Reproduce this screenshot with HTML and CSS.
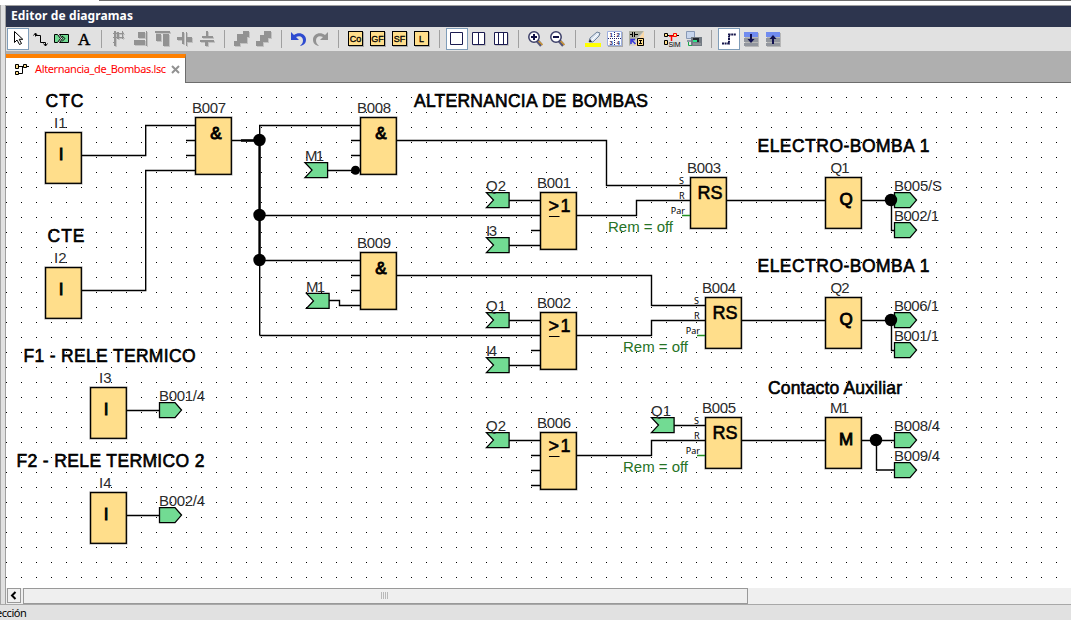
FILE: index.html
```html
<!DOCTYPE html>
<html lang="es">
<head>
<meta charset="utf-8">
<title>Editor de diagramas</title>
<link rel="stylesheet" href="styles.css">
</head>
<body>
<div class="app">
  <div class="top-edge"></div>
  <div class="workspace">
    <div class="splitter"></div>
    <main class="editor">
      <header class="titlebar"><span class="title">Editor de diagramas</span></header>
      <div class="toolbar">
        <svg class="tool active" viewBox="0 0 22 22"><path d="M7.5 3.5v11l2.5-2.5 2.5 4.5 2-1-2.3-4.2h3.6z" fill="#fff" stroke="#000"/></svg>
        <svg class="tool" viewBox="0 0 22 22"><path class="line" d="M6.500 8.500v-3M4.500 7.500l2-2.500 2 2.500M6 7.500h5.500v7h5v3.500M14.500 15.500l2 2.500 2-2.500"/></svg>
        <svg class="tool" viewBox="0 0 22 22"><path d="M3.500 6.500h3l3 4-3 4h-3zM8.500 6.500h9v8h-9l3-4z" fill="#72db93" stroke="#000"/><path class="line" d="M11 8l3 2.500-3 3"/></svg>
        <svg class="tool" viewBox="0 0 22 22"><text class="serif-a" x="5" y="17">A</text></svg>
        <i class="sep"></i>
        <svg class="tool gray shade" viewBox="0 0 22 22"><path d="M6 3h2v15H6zM5 5h11v1H5zM5 9h11v1H5zM9 4h2v7H9zM14 3h1v8h-1zM5 14h3v1H5z"/></svg>
        <svg class="tool gray shade" viewBox="0 0 22 22"><path d="M16 3h1v15h-1zM8 4h7v6H8zM4 12h11v5H4z"/></svg>
        <svg class="tool gray shade" viewBox="0 0 22 22"><path d="M3 3h15v2H3zM4 6h5v7H4zM11 6h6v12h-6z"/></svg>
        <svg class="tool gray shade" viewBox="0 0 22 22"><path d="M3 9h5v3H3zM8 4h2v12H8zM12 4h1v14h-1zM13 9h5v5h-5z"/></svg>
        <svg class="tool gray shade" viewBox="0 0 22 22"><path d="M10 3h2v5h-2zM6 8h11v2H6zM4 12h14v2H4zM9 14h3v4H9z"/></svg>
        <i class="sep"></i>
        <svg class="tool gray shade" viewBox="0 0 22 22"><path d="M12 3h6v6h-2v6H9v3H3v-5h3V6h6z"/></svg>
        <svg class="tool gray shade" viewBox="0 0 22 22"><path d="M11 3h7v7h-3v4h-5v4H3v-5h4V7h4z"/></svg>
        <i class="sep"></i>
        <svg class="tool" viewBox="0 0 22 22"><path d="M3 4v8h8L8 9c4-2 7 0 7 3.500 0 2.500-1.500 4-3 5.500 3.500-.5 6-2.500 6-6.500C18 6 11 3 6 7z" fill="#2e4bd0"/></svg>
        <svg class="tool gray" viewBox="0 0 22 22"><path d="M18 4v8h-8l3-3c-4-2-7 0-7 3.500C6 15 7.500 16.500 9 18c-3.500-.5-6-2.500-6-6.500C3 6 10 3 15 7z"/></svg>
        <i class="sep"></i>
        <span class="tool"><b class="chip">Co</b></span>
        <span class="tool"><b class="chip">GF</b></span>
        <span class="tool"><b class="chip">SF</b></span>
        <span class="tool"><b class="chip">L</b></span>
        <i class="sep"></i>
        <svg class="tool active pane" viewBox="0 0 22 22"><path d="M4.500 4.500h12v12h-12z"/></svg>
        <svg class="tool pane" viewBox="0 0 22 22"><path d="M4.500 4.500h12v12h-12zM10.500 4.500v12"/></svg>
        <svg class="tool pane" viewBox="0 0 22 22"><path d="M4.500 4.500h13v12h-13zM8.500 4.500v12M13.500 4.500v12"/></svg>
        <i class="sep"></i>
        <svg class="tool" viewBox="0 0 22 22"><path d="M12.500 13l4 4.500" stroke="#557" stroke-width="3.500"/><path d="M13.500 13l4 4" stroke="#d49b32" stroke-width="1.500"/><circle cx="9" cy="9" r="5.200" fill="#fff" stroke="#3c3f68" stroke-width="1.500"/><path d="M6 9h6M9 6v6" stroke="#111144" stroke-width="2"/></svg>
        <svg class="tool" viewBox="0 0 22 22"><path d="M12.500 13l4 4.500" stroke="#557" stroke-width="3.500"/><path d="M13.500 13l4 4" stroke="#d49b32" stroke-width="1.500"/><circle cx="9" cy="9" r="5.200" fill="#fff" stroke="#3c3f68" stroke-width="1.500"/><path d="M6 9h6" stroke="#111144" stroke-width="2"/></svg>
        <i class="sep"></i>
        <svg class="tool" viewBox="0 0 22 22"><path d="M3 15h16v4H3z" fill="#ff0"/><path d="M7 14l1-4 7-6 3 1-1 3-6 6z" fill="#dce6f2" stroke="#6f8299"/><path d="M7 14l1-3 2 3z" fill="#223"/><path d="M10 12l6-6" stroke="#fff"/></svg>
        <svg class="tool" viewBox="0 0 22 22"><path d="M4 4h15v15H4z" fill="#aaa"/><path d="M3.500 3.500h14v14h-14z" fill="#fff" stroke="#9fb0e0"/><path d="M10.500 4v13M4 10.500h13" stroke="#20206a" stroke-dasharray="1 1"/><text class="digits" x="5.500" y="9">1</text><text class="digits" x="12.500" y="9">2</text><text class="digits" x="5.500" y="16.500">3</text><text class="digits" x="12.500" y="16.500">4</text></svg>
        <svg class="tool" viewBox="0 0 22 22"><path d="M3 3h15v15H3z" fill="#d3d3d3"/><path d="M3 3h15L3 18z" fill="#acaea0"/><path d="M18 3v15H8z" fill="#fbd9a6"/><path class="line" d="M4 6.500h3M6.500 4v5M8.500 4v5M9 6.500h3"/><path d="M11.500 10.500h6v7h-6z" fill="#ffde8b" stroke="#000"/><path class="line" d="M13 12.500h3M14.500 12v4M13 15.500h3"/><path d="M9.500 16L6 12.500M5 16v-4.500h4" fill="none" stroke="#3434e0" stroke-width="1.500"/></svg>
        <i class="sep"></i>
        <svg class="tool" viewBox="0 0 22 22"><path d="M3.500 5.500h3v3h-3zM3.500 12.500h3v4h-3z" fill="#ffde8b" stroke="#000"/><path d="M7 7.500h6M16 7.500h2" stroke="#000"/><path d="M8 8h5M10.500 8v5" stroke="#f00" stroke-width="1.500"/><path d="M12.500 5.500h3v3h-3z" fill="#ffde8b" stroke="#f00"/><text class="sim" x="7.500" y="19" textLength="12">SIM</text></svg>
        <svg class="tool" viewBox="0 0 22 22"><path d="M3.500 3.500h8v7h-8z" fill="#c7d5ec" stroke="#8798b5"/><path d="M4 12h8v2H4z" fill="#8d96a5"/><path d="M8 9h11v9H8z" fill="#737b83"/><path d="M10 10h6v4h-6z" fill="#23272e"/><path d="M10 12h4v2h-4z" fill="#2fe58b"/><path d="M5.500 14v3.500H9" fill="none" stroke="#18a64a"/><path d="M10 16h8" stroke="#aaa"/></svg>
        <i class="sep"></i>
        <svg class="tool active" viewBox="0 0 22 22"><path d="M4 15.500h7v-9h7" fill="none" stroke="#16164c" stroke-width="2" stroke-dasharray="2 .6"/></svg>
        <svg class="tool" viewBox="0 0 22 22"><path d="M5 5h14v14H5z" fill="#b7b7b7"/><path d="M4 4h14v5H4z" fill="#708bef"/><path d="M4 10h14v4H4zM4 15h14v3H4z" fill="#92969e"/><path d="M11 6v6" stroke="#101050" stroke-width="2"/><path d="M7.500 11h7L11 15z" fill="#101050"/></svg>
        <svg class="tool" viewBox="0 0 22 22"><path d="M5 5h14v14H5z" fill="#b7b7b7"/><path d="M4 4h14v5H4z" fill="#708bef"/><path d="M4 10h14v4H4zM4 15h14v3H4z" fill="#92969e"/><path d="M11 9v7" stroke="#101050" stroke-width="2"/><path d="M7.500 11h7L11 7z" fill="#101050"/></svg>
      </div>
      <nav class="tabs">
        <div class="tab">
          <svg class="tab-icon" viewBox="0 0 16 16"><path d="M5 3.500h6M12 3.500h3M8.500 4v6.500H5" fill="none" stroke="#000"/><path d="M1.500 1.500h3v4h-3zM1.500 8.500h3v3h-3zM9.500 1.500h3v3h-3z" fill="#ffde8b" stroke="#000"/></svg>
          <span class="tab-name">Alternancia_de_Bombas.lsc</span>
          <svg class="tab-close" viewBox="0 0 9 9"><path d="M1 1l7 7M8 1L1 8"/></svg>
        </div>
        <div class="tab-rest"></div>
      </nav>
      <svg class="canvas" viewBox="6 83 1065 505">
        <defs>
          <pattern id="grid" x="6" y="97" width="15" height="15" patternUnits="userSpaceOnUse"><rect width="1" height="1" fill="#000"/></pattern>
          <path id="in" d="M0 0h22.600v15H0l7-7.500z"/>
          <path id="out" d="M0 0h15.500l6.500 7.500-6.500 7.500H0z"/>
          <rect id="small" width="35.700" height="50.700"/>
          <rect id="gate" width="35.700" height="56.700"/>
        </defs>
        <rect x="6" y="83" width="1051" height="505" fill="url(#grid)"/>

        <g class="halo">
          <use href="#small" x="45.600" y="132.600"/><use href="#small" x="45.600" y="267.600"/><use href="#small" x="90.600" y="387.600"/><use href="#small" x="90.600" y="492.600"/>
          <use href="#gate" x="195.600" y="117.600"/><use href="#gate" x="360.600" y="117.600"/><use href="#gate" x="360.600" y="252.600"/>
          <use href="#gate" x="540.600" y="192.600"/><use href="#gate" x="540.600" y="312.600"/><use href="#gate" x="540.600" y="432.600"/>
          <use href="#small" x="690.600" y="177.600"/><use href="#small" x="705.600" y="297.600"/><use href="#small" x="705.600" y="417.600"/>
          <use href="#small" x="825.600" y="177.600"/><use href="#small" x="825.600" y="297.600"/><use href="#small" x="825.600" y="417.600"/>
        </g>

        <g class="wires">
          <path d="M82 155.500h63.700v-30H195M82 290.500h63.700v-120H195M186 140.500h9M186 155.500h9"/>
          <path d="M232 140.500h27M259.700 335.500v-210H360M259.700 215.500H540M259.700 260.500H360M259.700 335.500H540"/>
          <path class="heavy" d="M241 140.500h18M259.500 140v120"/>
          <path d="M351 140.500h9M351 155.500h9M328 170.500h32M351 275.500h9M351 290.500h9M329 300.500h10.500v5H360"/>
          <path d="M397 140.500h209.500v45H690M397 275.500h254.500v30H705"/>
          <path d="M509 200.500h31M531 230.500h9M509 245.500h31M577 215.500h59.500v-15H690"/>
          <path d="M509 320.500h31M531 350.500h9M509 365.500h31M577 335.500h74.500v-15H705"/>
          <path d="M509 440.500h31M531 455.500h9M531 470.500h9M531 485.500h9M577 455.500h74.500v-15H705M674 425.500h31"/>
          <path d="M727 200.500h98M742 320.500h83M742 440.500h83M862 200.500h29.500v30h4M862 320.500h29.500v30h4M862 440.500h32M876.500 440v30H894M127 410.500h32M127 515.500h32"/>
          <path class="param" d="M682 215.500h8M697 335.500h8M697 455.500h8"/>
        </g>

        <g class="blocks">
          <use href="#small" x="45.600" y="132.600"/><use href="#small" x="45.600" y="267.600"/><use href="#small" x="90.600" y="387.600"/><use href="#small" x="90.600" y="492.600"/>
          <use href="#gate" x="195.600" y="117.600"/><use href="#gate" x="360.600" y="117.600"/><use href="#gate" x="360.600" y="252.600"/>
          <use href="#gate" x="540.600" y="192.600"/><use href="#gate" x="540.600" y="312.600"/><use href="#gate" x="540.600" y="432.600"/>
          <use href="#small" x="690.600" y="177.600"/><use href="#small" x="705.600" y="297.600"/><use href="#small" x="705.600" y="417.600"/>
          <use href="#small" x="825.600" y="177.600"/><use href="#small" x="825.600" y="297.600"/><use href="#small" x="825.600" y="417.600"/>
        </g>
        <g class="flags">
          <use href="#in" x="305" y="162.600"/><use href="#in" x="306.500" y="293.400"/>
          <use href="#in" x="486.500" y="192.600"/><use href="#in" x="486.500" y="237.600"/><use href="#in" x="486.500" y="312.600"/><use href="#in" x="486.500" y="357.600"/><use href="#in" x="486.500" y="432.600"/><use href="#in" x="651.500" y="417.600"/>
          <use href="#out" x="159.500" y="402.600"/><use href="#out" x="159.500" y="507.600"/>
          <use href="#out" x="894.500" y="192.600"/><use href="#out" x="894.500" y="222.600"/><use href="#out" x="894.500" y="312.600"/><use href="#out" x="894.500" y="342.600"/><use href="#out" x="894.500" y="432.600"/><use href="#out" x="894.500" y="462.600"/>
        </g>
        <g>
          <circle cx="259.500" cy="140" r="6.200"/><circle cx="259.500" cy="215" r="6.200"/><circle cx="259.500" cy="260" r="6.200"/>
          <circle cx="355.500" cy="170.200" r="4.500"/><circle cx="891" cy="200" r="6.200"/><circle cx="891" cy="320" r="6.200"/><circle cx="876" cy="440" r="6.200"/>
        </g>

        <g class="comment">
          <text x="45.500" y="107" textLength="38">CTC</text><text x="47.500" y="242" textLength="37">CTE</text>
          <text x="414" y="107" textLength="234">ALTERNANCIA DE BOMBAS</text>
          <text x="757.500" y="152" textLength="172">ELECTRO-BOMBA 1</text><text x="757.500" y="272" textLength="172">ELECTRO-BOMBA 1</text>
          <text x="768" y="394" textLength="134">Contacto Auxiliar</text>
          <text x="23.500" y="362" textLength="172">F1 - RELE TERMICO</text><text x="16.500" y="467" textLength="188">F2 - RELE TERMICO 2</text>
        </g>
        <g class="name">
          <text x="54" y="128">I1</text><text x="54" y="263">I2</text><text x="99" y="383">I3</text><text x="99" y="488">I4</text>
          <text x="192" y="113" textLength="34">B007</text><text x="357" y="113" textLength="34">B008</text><text x="357" y="248" textLength="34">B009</text>
          <text x="537" y="188" textLength="34">B001</text><text x="537" y="308" textLength="34">B002</text><text x="537" y="428" textLength="34">B006</text>
          <text x="687" y="173" textLength="34">B003</text><text x="702" y="293" textLength="34">B004</text><text x="702" y="413" textLength="34">B005</text>
          <text x="830.500" y="173" textLength="19">Q1</text><text x="830.500" y="293" textLength="19">Q2</text><text x="830" y="413" textLength="19">M1</text>
          <text x="305" y="161" textLength="19">M1</text><text x="306" y="292" textLength="19">M1</text>
          <text x="486" y="191">Q2</text><text x="486" y="236" textLength="11">I3</text><text x="486" y="311">Q1</text><text x="486" y="356" textLength="11">I4</text><text x="486" y="431">Q2</text><text x="651" y="416">Q1</text>
          <text x="159" y="401" textLength="46">B001/4</text><text x="159" y="506" textLength="46">B002/4</text>
          <text x="894" y="191" textLength="48">B005/S</text><text x="894" y="221" textLength="45">B002/1</text>
          <text x="894" y="311" textLength="45">B006/1</text><text x="894" y="341" textLength="45">B001/1</text>
          <text x="894" y="431" textLength="46">B008/4</text><text x="894" y="461" textLength="46">B009/4</text>
        </g>
        <g class="symbol">
          <text x="61" y="160">I</text><text x="61" y="295">I</text><text x="106" y="415">I</text><text x="106" y="520">I</text>
          <text x="216" y="139">&amp;</text><text x="381" y="139">&amp;</text><text x="381" y="274">&amp;</text>
          <text x="846" y="205">Q</text><text x="846" y="325">Q</text><text x="846" y="445">M</text>
        </g>
        <g class="function">
          <text x="548.500" y="212" textLength="22">&gt;1</text><text x="548.500" y="332" textLength="22">&gt;1</text><text x="548.500" y="452" textLength="22">&gt;1</text>
          <text x="697.500" y="199">RS</text><text x="712.500" y="319">RS</text><text x="712.500" y="439">RS</text>
        </g>
        <path class="or-bar" d="M549 216.500h10.500M549 336.500h10.500M549 456.500h10.500"/>
        <g class="port">
          <text x="684" y="184">S</text><text x="684.500" y="199">R</text><text x="685" y="214">Par</text>
          <text x="699" y="304">S</text><text x="699.500" y="319">R</text><text x="700" y="334">Par</text>
          <text x="699" y="424">S</text><text x="699.500" y="439">R</text><text x="700" y="454">Par</text>
        </g>
        <g class="remark">
          <text x="608" y="232" textLength="65">Rem = off</text><text x="623" y="352" textLength="65">Rem = off</text><text x="623" y="472" textLength="65">Rem = off</text>
        </g>
      </svg>
      <div class="scrollbar">
        <div class="scroll-btn"><svg viewBox="0 0 7 9"><path d="M5.500 1L2 4.500 5.500 8"/></svg></div>
        <div class="thumb"><i class="grip"></i></div>
      </div>
    </main>
  </div>
  <footer class="status"><span class="status-text">ección</span></footer>
</div>
</body>
</html>
```

FILE: styles.css
```css
* { box-sizing: border-box; }

body {
  margin: 0;
  background: #fff;
  font-family: "Noto Sans", sans-serif;
}

.app {
  display: flex;
  flex-direction: column;
  width: 1071px;
  height: 620px;
  overflow: hidden;
}

.top-edge {
  height: 5px;
  flex: none;
  background: linear-gradient(#6d6d6d, #6d6d6d) 99px 0 / 972px 1px no-repeat #fff;
}

.workspace {
  display: flex;
  height: 599px;
}

.splitter {
  width: 6px;
  flex: none;
  background: #e1e1e1;
  border-left: 1px solid #a5a5a5;
  border-right: 1px solid #a0a0a0;
}

.editor {
  display: flex;
  flex-direction: column;
  width: 1065px;
}

.titlebar {
  display: flex;
  align-items: center;
  height: 22px;
  padding-left: 5px;
  background: #2d354e;
  border-top: 1px solid #a0a0a0;
  color: #fff;
}

.title {
  margin-top: -2px;
  font: bold 12px/20px "Noto Sans", sans-serif;
  letter-spacing: 0.1px;
}

.toolbar {
  display: flex;
  height: 24px;
  padding: 1px 0 1px 1px;
  background: #e1e1e1;
}

.tool {
  display: flex;
  align-items: center;
  justify-content: center;
  width: 22px;
  height: 22px;
  flex: none;
}

.tool.active {
  background: #fff;
  outline: 1px solid #7f9db9;
  outline-offset: -1px;
}

.line { fill: none; stroke: #000; }
.gray path { fill: #929292; }
.shade { filter: drop-shadow(1px 1px 0 #c2c2c2); }
.pane path { fill: #fff; stroke: #1b1b50; }
.pane { filter: drop-shadow(1px 1px 0 #c2c2c2); }
.pane.active { filter: none; }

.serif-a {
  font: 17px "Liberation Serif", serif;
  stroke: #000;
  stroke-width: 0.500px;
}

.digits { font: bold 6px "Liberation Sans", sans-serif; fill: #20206a; }
.sim { font: 7px "Liberation Sans", sans-serif; }

.chip {
  width: 15px;
  height: 15px;
  margin: -1px 1px 0 0;
  border: 1px solid #000;
  background: #ffde8b;
  box-shadow: 1px 1px 0 #aaa;
  font: 9px/14px "Liberation Sans", sans-serif;
  -webkit-text-stroke: 0.300px #000;
  text-align: center;
}

.sep {
  width: 1px;
  height: 18px;
  flex: none;
  margin: 2px 6px;
  background: #a0a0a0;
}

.tabs {
  display: flex;
  height: 32px;
  padding-top: 3px;
  background: #afafaf;
}

.tab {
  display: flex;
  align-items: center;
  width: 180px;
  border-top: 4px solid #ff8000;
  border-right: 1px solid #6d6d6d;
  padding-left: 8px;
  background: #fff;
}

.tab-rest {
  flex: 1;
  border-bottom: 1px solid #6d6d6d;
}

.tab-icon { width: 16px; height: 16px; margin-top: 1px; }

.tab-name {
  width: 132px;
  margin: -3px 0 0 5px;
  color: #f00;
  font: 11px/16px "Noto Sans", sans-serif;
  letter-spacing: -0.370px;
  white-space: nowrap;
}

.tab-close { width: 9px; height: 9px; margin: -3px 0 0 4px; }
.tab-close path { fill: none; stroke: #929292; stroke-width: 2; }

.canvas {
  width: 1065px;
  height: 505px;
  flex: none;
  background: #fff;
}

.halo { fill: none; stroke: #a8a8a8; stroke-width: 2.500; }
.wires { fill: none; stroke: #000; stroke-width: 1.400; }
.wires .heavy { stroke-width: 2.300; }
.wires .param { stroke: #249124; }
.blocks { fill: #ffde8b; stroke: #000; stroke-width: 1.300; }
.flags { fill: #72db93; stroke: #000; stroke-width: 1.300; }

.comment {
  font: 17.500px "Liberation Sans", Arial, sans-serif;
  stroke: #000;
  stroke-width: 0.600px;
}

.name {
  font: 15px "Liberation Sans", Arial, sans-serif;
  fill: #2b2b2b;
}

.symbol {
  font: 17px "Liberation Sans", Arial, sans-serif;
  stroke: #000;
  stroke-width: 0.900px;
  text-anchor: middle;
}

.function {
  font: 18px "Liberation Sans", Arial, sans-serif;
  stroke: #000;
  stroke-width: 0.600px;
}

.or-bar { stroke: #000; stroke-width: 1.200; }

.port {
  font: 9px "Noto Sans", sans-serif;
  text-anchor: end;
}

.remark {
  font: 15px "Liberation Sans", Arial, sans-serif;
  fill: #267326;
}

.scrollbar {
  display: flex;
  height: 16px;
  padding-left: 1px;
  background: #efefef;
}

.scroll-btn {
  display: flex;
  align-items: center;
  justify-content: center;
  width: 14px;
  height: 15px;
  border: 1px solid #999;
  background: #f0f0f0;
}

.scroll-btn svg { width: 7px; height: 9px; margin-right: 1px; }
.scroll-btn path { fill: none; stroke: #000; stroke-width: 2; }

.thumb {
  display: flex;
  align-items: center;
  justify-content: center;
  width: 725px;
  height: 16px;
  margin-left: 2px;
  border: 1px solid #999;
  background: #efefef;
}

.grip {
  width: 7px;
  height: 7px;
  margin: -1px 2px 0 0;
  background: repeating-linear-gradient(90deg, #b8b8b8 0 1px, transparent 1px 2px);
}

.status {
  height: 16px;
  flex: none;
  overflow: hidden;
  background: #e1e1e1;
  border-top: 1px solid #a8a8a8;
}

.status-text {
  display: block;
  margin: 0 0 0 -4px;
  font: 11px/16px "Noto Sans", sans-serif;
  letter-spacing: -0.450px;
}
```
